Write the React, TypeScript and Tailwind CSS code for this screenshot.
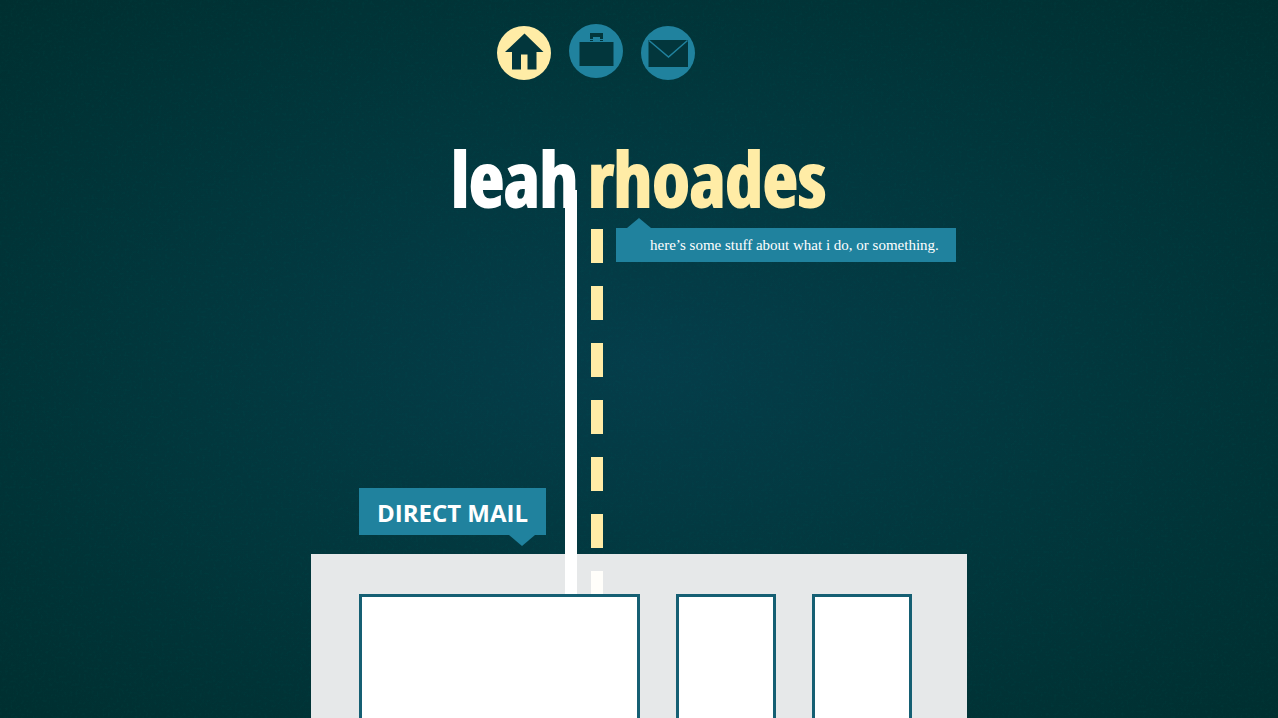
import React from "react";

const dashes = [0, 1, 2, 3, 4, 5];

function HomeIcon() {
  return (
    <svg viewBox="0 0 54 54" className="block size-[54px]" aria-hidden="true">
      <circle cx="27" cy="27" r="27" fill="#ffeca6" />
      <path d="M27.500 7.500 46.500 26H39.500V43.500H30.500V28.500H24V43.500H15V26H8Z" fill="#02363c" />
    </svg>
  );
}

function BriefcaseIcon() {
  return (
    <svg viewBox="0 0 54 54" className="block size-[54px]" aria-hidden="true">
      <circle cx="27" cy="27" r="27" fill="#20829e" />
      <path d="M21 9H34V17H31V13H24V17H21Z" fill="#02363c" />
      <path d="M21 15.500H24M31 15.500H34" stroke="#20829e" strokeWidth="1" />
      <path d="M10.500 18H44.500V42H10.500Z" fill="#02363c" />
    </svg>
  );
}

function MailIcon() {
  return (
    <svg viewBox="0 0 54 54" className="block size-[54px]" aria-hidden="true">
      <circle cx="27" cy="27" r="27" fill="#20829e" />
      <path d="M7.500 14H47V41H7.500Z" fill="#02363c" />
      <path d="M8 14.500 27.500 31 46.500 14.500" fill="none" stroke="#20829e" strokeWidth="1.500" />
    </svg>
  );
}

function Backdrop() {
  return (
    <svg className="absolute inset-0 -z-10 size-full opacity-3" aria-hidden="true">
      <filter id="grain" x="0" y="0" width="100%" height="100%">
        <feTurbulence type="fractalNoise" baseFrequency="0.37" numOctaves="3" seed="9" />
        <feColorMatrix values="0 0 0 0 0  0 0 0 0 0.4  0 0 0 0 0.3  0 4 0 0 -2" />
      </filter>
      <rect width="100%" height="100%" filter="url(#grain)" />
    </svg>
  );
}

function Road() {
  return (
    <div className="absolute -top-6 -bottom-10 left-[254px] z-10 flex gap-[14px]" aria-hidden="true">
      <div className="w-3 bg-white" />
      <div className="flex w-3 flex-col gap-[23px] pt-[39px]">
        {dashes.map((n) => (
          <div key={n} className="h-[34px] bg-[#ffeca6]" />
        ))}
        <div className="flex-1 bg-[#fffefa]" />
      </div>
    </div>
  );
}

export default function App() {
  return (
    <div className="relative isolate flex min-h-screen flex-col overflow-hidden bg-[radial-gradient(ellipse_at_50%_50%,#053d4a_0%,#02373d_50%,#002f30_100%)] font-['Open_Sans',sans-serif]">
      <Backdrop />
      <div className="mx-auto flex w-full max-w-[656px] flex-1 flex-col pt-6">
        <nav className="flex h-14 items-end gap-[18px] pl-[186px]" aria-label="Main">
          <a href="#home" aria-label="Home" aria-current="page"><HomeIcon /></a>
          <a href="#work" aria-label="Work" className="self-start"><BriefcaseIcon /></a>
          <a href="#contact" aria-label="Contact"><MailIcon /></a>
        </nav>

        <h1 className="mt-14 flex h-[78px] gap-[10px] font-['Open_Sans_Condensed','Noto_Sans_Condensed','Roboto_Condensed',sans-serif] text-[76px] leading-[84px] font-extrabold whitespace-nowrap [-webkit-text-stroke-width:2px]">
          <span className="flex w-[267px] shrink-0 justify-end text-white">leah</span>
          <span className="text-[#ffeca6]">rhoades</span>
        </h1>

        <section className="relative flex h-[340px] justify-between pr-[11px] pl-12">
          <Road />
          <div className="relative mb-[19px] flex h-[47px] w-[187px] shrink-0 items-center justify-center self-end bg-[#20829e] pt-0.5">
            <h2 className="text-2xl font-bold whitespace-nowrap text-white">DIRECT MAIL</h2>
            <svg viewBox="0 0 26 11" className="absolute top-full right-[11px] h-[11px] w-[26px]" aria-hidden="true">
              <path d="M0 0H26L13 11Z" fill="#20829e" />
            </svg>
          </div>
          <div className="relative mt-[14px] flex h-[34px] w-[340px] shrink-0 items-center bg-[#20829e] pl-[34px]">
            <svg viewBox="0 0 24 10" className="absolute bottom-full left-[11px] h-[10px] w-6" aria-hidden="true">
              <path d="M0 10H24L12 0Z" fill="#20829e" />
            </svg>
            <p className="font-['Liberation_Serif',serif] text-[15px] whitespace-nowrap text-white">here’s some stuff about what i do, or something.</p>
          </div>
        </section>

        <section className="flex flex-1 gap-9 bg-[#e6e8e9] px-12 pt-10" aria-label="Direct mail samples">
          <article className="w-[281px] border-3 border-b-0 border-[#155f73] bg-white" />
          <article className="w-[100px] border-3 border-b-0 border-[#155f73] bg-white" />
          <article className="w-[100px] border-3 border-b-0 border-[#155f73] bg-white" />
        </section>
      </div>
    </div>
  );
}
